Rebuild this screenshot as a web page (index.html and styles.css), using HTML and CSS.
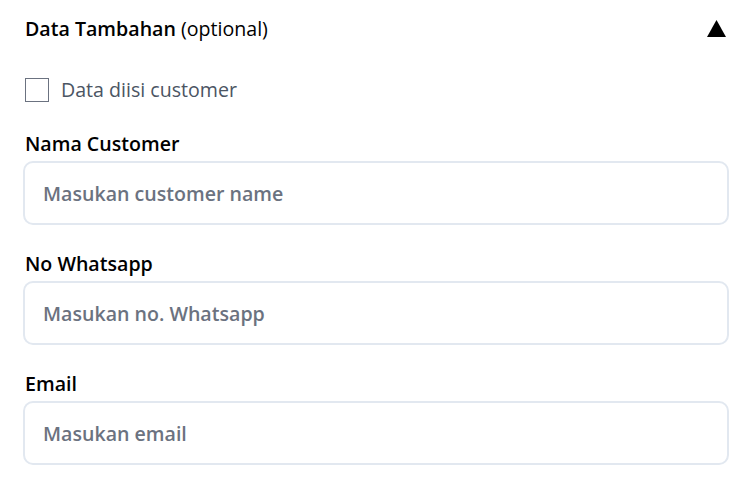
FILE: index.html
```html
<!DOCTYPE html>
<html lang="id">
<head>
  <meta charset="UTF-8">
  <title>Data Tambahan</title>
  <link rel="stylesheet" href="styles.css">
</head>
<body>

<div class="section">
  <div class="section-head">
    <div class="section-title"><b>Data Tambahan</b> (optional)</div>
    <svg class="toggle" width="19" height="17" viewBox="0 0 19 17">
      <polygon points="9.5,0 19,17 0,17" fill="#000"/>
    </svg>
  </div>

  <label class="check-row">
    <input type="checkbox" class="check">
    <span>Data diisi customer</span>
  </label>

  <div class="field">
    <label for="nama">Nama Customer</label>
    <input id="nama" type="text" placeholder="Masukan customer name">
  </div>

  <div class="field">
    <label for="wa">No Whatsapp</label>
    <input id="wa" type="text" placeholder="Masukan no. Whatsapp">
  </div>

  <div class="field">
    <label for="email">Email</label>
    <input id="email" type="text" placeholder="Masukan email">
  </div>
</div>

</body>
</html>
```

FILE: styles.css
```css
body {
  margin: 0;
  background: #fff;
  font-family: "Open Sans", "Noto Sans", sans-serif;
  color: #000;
}
.section {
  padding: 0 21px 0 23px;
}
.section-head {
  display: flex;
  justify-content: space-between;
  align-items: center;
  height: 56px;
}
.section-title {
  font-size: 19.6px;
  font-weight: 400;
  padding-left: 2px;
}
.section-title b {
  font-weight: 600;
}
.toggle {
  margin-right: 3px;
}
.check-row {
  display: flex;
  align-items: center;
  gap: 12px;
  margin-top: 22px;
  padding-left: 2px;
  font-size: 19.6px;
  line-height: 22px;
  color: #4b5563;
  height: 24px;
}
.check {
  appearance: none;
  margin: 0;
  width: 24px;
  height: 24px;
  border: 1.5px solid #6b7280;
  background: #fff;
}
.field {
  margin-top: 30px;
}
.field + .field {
  margin-top: 27px;
}
.field label {
  display: block;
  font-size: 19.6px;
  font-weight: 600;
  line-height: 24px;
  padding-left: 2px;
  margin-bottom: 5px;
}
.field input {
  display: block;
  box-sizing: border-box;
  width: 100%;
  height: 64px;
  border: 2px solid #e2e8f0;
  border-radius: 10px;
  padding: 0 18px;
  font-family: inherit;
  font-size: 19.6px;
  font-weight: 600;
  outline: none;
}
.field input::placeholder {
  color: #6b7280;
}
```
